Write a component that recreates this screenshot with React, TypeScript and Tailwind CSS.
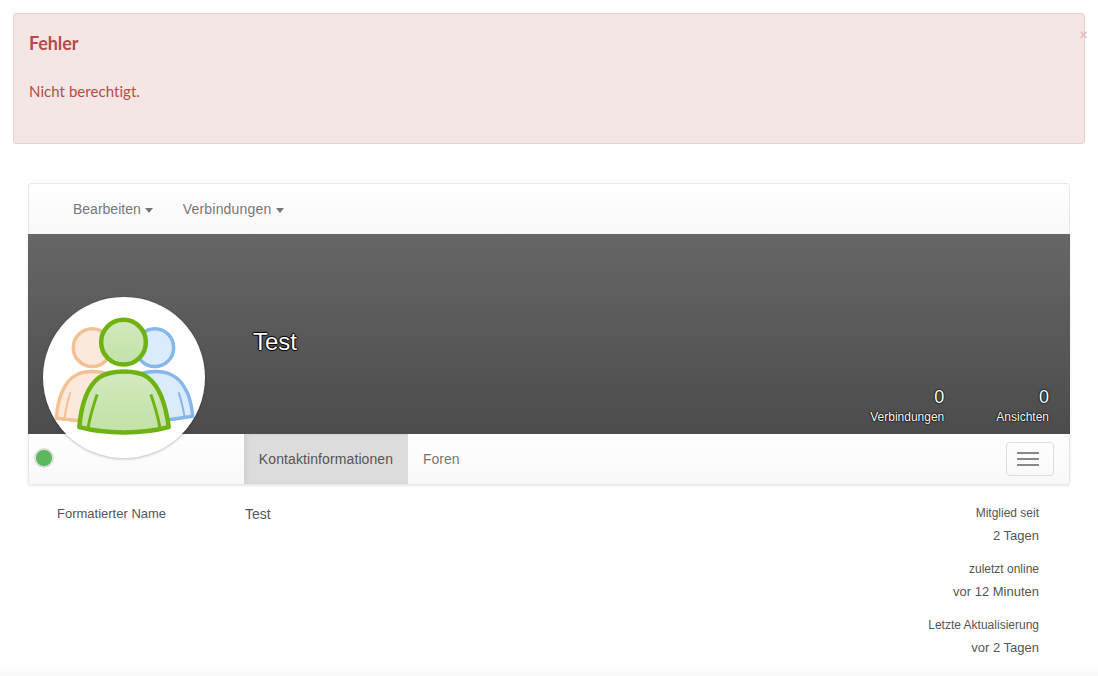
const Avatar = () => {
    return (
        <svg viewBox="0 0 162 162" className="w-full h-full">
            <defs>
                <linearGradient id="g" x1="0" y1="0" x2="0" y2="1">
                    <stop offset="0" stopColor="#d3e8bf" />
                    <stop offset="1" stopColor="#c3e2a6" />
                </linearGradient>
            </defs>
            {/* left person */}
            <circle cx="49" cy="51" r="19" fill="#fbe9dc" stroke="#f5c093" strokeWidth="3.5" />
            <path d="M13 122 C14 102 21 84 34 78 C42 74 56 74 66 78 L66 128 Z" fill="#fbe9dc" stroke="#f5c093" strokeWidth="3.5" strokeLinejoin="round" />
            <path d="M27 96 C24 106 22 114 21 124" fill="none" stroke="#f5c093" strokeWidth="2" />
            {/* right person */}
            <circle cx="112" cy="51" r="19" fill="#dcebfb" stroke="#84b8ea" strokeWidth="3.5" />
            <path d="M150 120 C149 102 142 84 128 78 C120 74 106 74 96 78 L96 128 Z" fill="#dcebfb" stroke="#84b8ea" strokeWidth="3.5" strokeLinejoin="round" />
            <path d="M136 96 C139 106 141 112 142 122" fill="none" stroke="#84b8ea" strokeWidth="2" />
            {/* front person */}
            <circle cx="80.5" cy="45.5" r="22.5" fill="url(#g)" stroke="#6eb312" strokeWidth="4.5" />
            <path d="M36 131 C38 108 44 90 56 81 C68 73 94 73 105 81 C117 90 123 108 126 131 C100 138 62 138 36 131 Z" fill="url(#g)" stroke="#6eb312" strokeWidth="4.5" strokeLinejoin="round" />
            <path d="M54 98 C50 110 46 122 45 132 M108 98 C112 110 116 122 117 132" fill="none" stroke="#6eb312" strokeWidth="3" />
        </svg>
    )
}

const Caret = () => <span className="inline-block ml-1 align-middle border-x-4 border-x-transparent border-t-[5px] border-t-[#777777]"></span>

const Side = ({ label, value }: { label: string; value: string }) => {
    return (
        <div className="mb-4">
            <div className="text-xs leading-[17px] text-[#555555]">{label}</div>
            <div className="text-[13px] leading-[18px] mt-[5px] text-[#555555]">{value}</div>
        </div>
    )
}

const App = () => {
    return (
        <div className="h-[676px] overflow-hidden font-['Liberation_Sans',Arial,sans-serif] text-[#333333] bg-[linear-gradient(to_bottom,#ffffff_664px,#f9f9f9_676px)]">
            <div className="pt-[13px] px-[13px]">
                <div className="relative h-[131px] bg-[#f5e6e6] border border-[#eccfcf] rounded-[3px] px-[15px] pt-[18px] text-[#b94a48] font-['Lato',sans-serif]">
                    <h4 className="font-bold text-lg leading-[22px] tracking-[-0.1px]">Fehler</h4>
                    <p className="mt-[26px] text-[15px] leading-[22px] tracking-[0.05px]">Nicht berechtigt.</p>
                    <span className="absolute right-[-4px] top-[13px] text-[15px] leading-[15px] font-bold text-[#e3bcc0]">×</span>
                </div>
            </div>

            <div className="mx-7 mt-[39px] w-[1042px] rounded-t-[4px] border-t border-x border-[#e7e7e7] bg-gradient-to-b from-white to-[#f8f8f8]">
                <div className="h-[50px] flex items-center pl-[44px] gap-[30px] text-sm text-[#777777]">
                    <span>Bearbeiten<Caret /></span>
                    <span className="tracking-[0.2px]">Verbindungen<Caret /></span>
                </div>
            </div>
            <div className="mx-7 w-[1042px] rounded-b-[4px] border-b border-x border-[#e7e7e7] shadow-[0_1px_3px_rgba(0,0,0,0.1)] relative">
                <div className="relative -mx-px h-[200px] bg-gradient-to-b from-[#666666] to-[#4c4c4c] flex justify-between text-white">
                    <div className="pl-[225px] pt-[93px] text-2xl leading-[30px] [text-shadow:1px_0_1px_#000,-1px_0_1px_#000,0_1px_1px_#000,0_-1px_1px_#000]">Test</div>
                    <div className="flex pt-[152px] pr-[21px] gap-[52px] text-right [text-shadow:0_0_2px_#000,0_0_1px_#000,0_0_1px_#000]">
                        <div>
                            <div className="text-lg leading-[22px]">0</div>
                            <div className="text-xs leading-[17px] mt-px">Verbindungen</div>
                        </div>
                        <div>
                            <div className="text-lg leading-[22px]">0</div>
                            <div className="text-xs leading-[17px] mt-px">Ansichten</div>
                        </div>
                    </div>
                </div>
                <div className="h-[50px] flex items-stretch bg-gradient-to-b from-white to-[#f8f8f8] rounded-b-[4px] pl-[215px] text-sm text-[#777777]">
                    <div className="w-[164px] flex items-center justify-center bg-[#dcdcdc] shadow-[inset_3px_0_4px_rgba(0,0,0,0.05)] text-[#555555] tracking-[0.1px]">Kontaktinformationen</div>
                    <div className="px-[15px] flex items-center">Foren</div>
                    <div className="ml-auto mr-[15px] my-2 w-12 h-[34px] border border-[#dddddd] rounded-[4px] flex flex-col items-center justify-center gap-1 pr-1">
                        <span className="w-[22px] h-0.5 bg-[#888888]"></span>
                        <span className="w-[22px] h-0.5 bg-[#888888]"></span>
                        <span className="w-[22px] h-0.5 bg-[#888888]"></span>
                    </div>
                </div>
                <div className="absolute left-[14px] top-[63px] w-[162px] h-[161px] rounded-full bg-white shadow-[0_1px_3px_rgba(0,0,0,0.25)]">
                    <Avatar />
                </div>
                <div className="absolute left-[5px] top-[214px] w-5 h-5 rounded-full bg-[#5cb85c] border-2 border-[#dddddd]"></div>
            </div>

            <div className="mx-7 w-[1042px] flex pt-5">
                <div className="w-[217px] pl-[29px] text-[13px] leading-[18px] text-[#555555]">Formatierter Name</div>
                <div className="text-sm leading-5 -mt-px text-[#555555]">Test</div>
                <div className="ml-auto pr-[31px] text-right">
                    <Side label="Mitglied seit" value="2 Tagen" />
                    <Side label="zuletzt online" value="vor 12 Minuten" />
                    <Side label="Letzte Aktualisierung" value="vor 2 Tagen" />
                </div>
            </div>
        </div>
    )
}

export default App
